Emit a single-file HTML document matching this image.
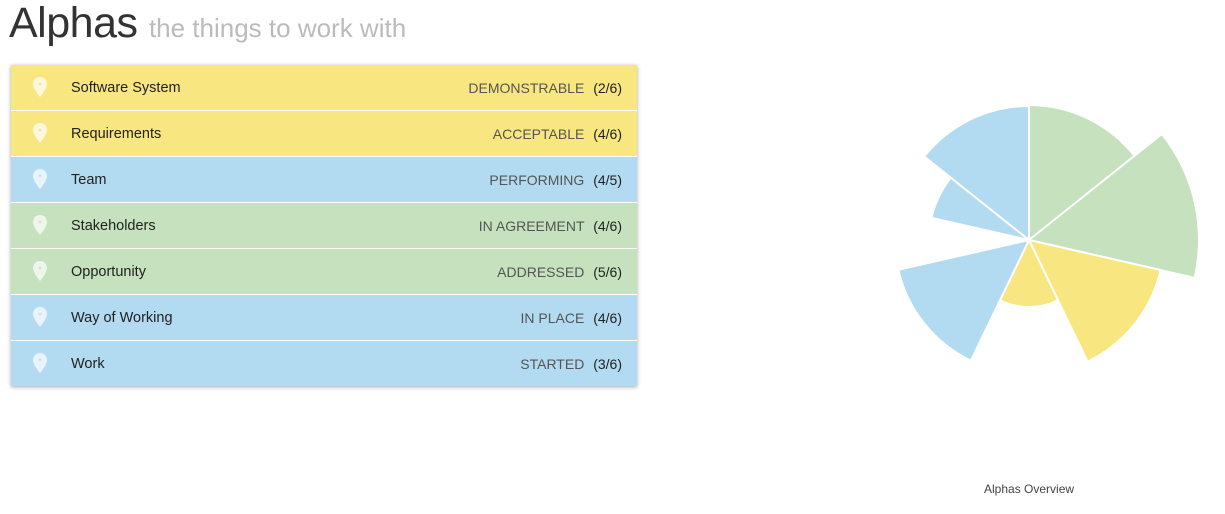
<!DOCTYPE html>
<html><head><meta charset="utf-8"><style>
body{margin:0;width:1225px;height:514px;background:#fff;font-family:"Liberation Sans",sans-serif;position:relative;overflow:hidden}
h1{position:absolute;left:9px;top:-1px;margin:0;font-weight:normal;font-size:43px;color:#333;letter-spacing:-0.5px}
h1 small{font-size:26px;color:#bbb;font-weight:normal;letter-spacing:0}
.list{position:absolute;left:11px;top:65px;width:626px;box-shadow:0 1px 4px rgba(0,0,0,.35)}
.row{height:45px;border-bottom:1px solid #fff;position:relative;font-size:14.5px;color:#222}
.row:last-child{border-bottom:none}
.y{background:#f8e680}.b{background:#b2daf1}.g{background:#c5e1be}
.row svg{position:absolute;left:22px;top:12px}
.name{position:absolute;left:60px;top:15px}
.st{position:absolute;right:15px;top:15px;color:#555;font-size:14px}
.st b{color:#222;margin-left:5px;font-weight:normal}
.cap{position:absolute;left:984px;top:482px;font-size:12px;color:#444}
</style></head><body>
<h1>Alphas <small>the things to work with</small></h1>
<div class="list">
<div class="row y"><svg width="14" height="20" viewBox="0 0 14 20"><path d="M7 0C3 0 0 3 0 7c0 5 7 13 7 13s7-8 7-13c0-4-3-7-7-7z" fill="rgba(255,255,255,.7)"/><circle cx="7" cy="7" r="1.5" fill="rgba(0,0,0,.08)"/></svg><span class="name">Software System</span><span class="st">DEMONSTRABLE <b>(2/6)</b></span></div>
<div class="row y"><svg width="14" height="20" viewBox="0 0 14 20"><path d="M7 0C3 0 0 3 0 7c0 5 7 13 7 13s7-8 7-13c0-4-3-7-7-7z" fill="rgba(255,255,255,.7)"/><circle cx="7" cy="7" r="1.5" fill="rgba(0,0,0,.08)"/></svg><span class="name">Requirements</span><span class="st">ACCEPTABLE <b>(4/6)</b></span></div>
<div class="row b"><svg width="14" height="20" viewBox="0 0 14 20"><path d="M7 0C3 0 0 3 0 7c0 5 7 13 7 13s7-8 7-13c0-4-3-7-7-7z" fill="rgba(255,255,255,.7)"/><circle cx="7" cy="7" r="1.5" fill="rgba(0,0,0,.08)"/></svg><span class="name">Team</span><span class="st">PERFORMING <b>(4/5)</b></span></div>
<div class="row g"><svg width="14" height="20" viewBox="0 0 14 20"><path d="M7 0C3 0 0 3 0 7c0 5 7 13 7 13s7-8 7-13c0-4-3-7-7-7z" fill="rgba(255,255,255,.7)"/><circle cx="7" cy="7" r="1.5" fill="rgba(0,0,0,.08)"/></svg><span class="name">Stakeholders</span><span class="st">IN AGREEMENT <b>(4/6)</b></span></div>
<div class="row g"><svg width="14" height="20" viewBox="0 0 14 20"><path d="M7 0C3 0 0 3 0 7c0 5 7 13 7 13s7-8 7-13c0-4-3-7-7-7z" fill="rgba(255,255,255,.7)"/><circle cx="7" cy="7" r="1.5" fill="rgba(0,0,0,.08)"/></svg><span class="name">Opportunity</span><span class="st">ADDRESSED <b>(5/6)</b></span></div>
<div class="row b"><svg width="14" height="20" viewBox="0 0 14 20"><path d="M7 0C3 0 0 3 0 7c0 5 7 13 7 13s7-8 7-13c0-4-3-7-7-7z" fill="rgba(255,255,255,.7)"/><circle cx="7" cy="7" r="1.5" fill="rgba(0,0,0,.08)"/></svg><span class="name">Way of Working</span><span class="st">IN PLACE <b>(4/6)</b></span></div>
<div class="row b"><svg width="14" height="20" viewBox="0 0 14 20"><path d="M7 0C3 0 0 3 0 7c0 5 7 13 7 13s7-8 7-13c0-4-3-7-7-7z" fill="rgba(255,255,255,.7)"/><circle cx="7" cy="7" r="1.5" fill="rgba(0,0,0,.08)"/></svg><span class="name">Work</span><span class="st">STARTED <b>(3/6)</b></span></div>
</div>
<svg width="1225" height="514" style="position:absolute;left:0;top:0" stroke="#fff" stroke-width="2" stroke-linejoin="round">
<path d="M1029 240L1029 105A135 135 0 0 1 1134.5 155.8Z" fill="#c5e1be"/>
<path d="M1029 240L1161.9 134A170 170 0 0 1 1194.7 277.8Z" fill="#c5e1be"/>
<path d="M1029 240L1160.6 270A135 135 0 0 1 1087.6 361.6Z" fill="#f8e680"/>
<path d="M1029 240L1058.1 300.4A67 67 0 0 1 999.9 300.4Z" fill="#f8e680"/>
<path d="M1029 240L970.9 360.7A134 134 0 0 1 898.4 269.8Z" fill="#b2daf1"/>
<path d="M1029 240L931.5 217.8A100 100 0 0 1 950.8 177.7Z" fill="#b2daf1"/>
<path d="M1029 240L924.2 156.5A134 134 0 0 1 1029 106Z" fill="#b2daf1"/>
</svg>
<div class="cap">Alphas Overview</div>
</body></html>
